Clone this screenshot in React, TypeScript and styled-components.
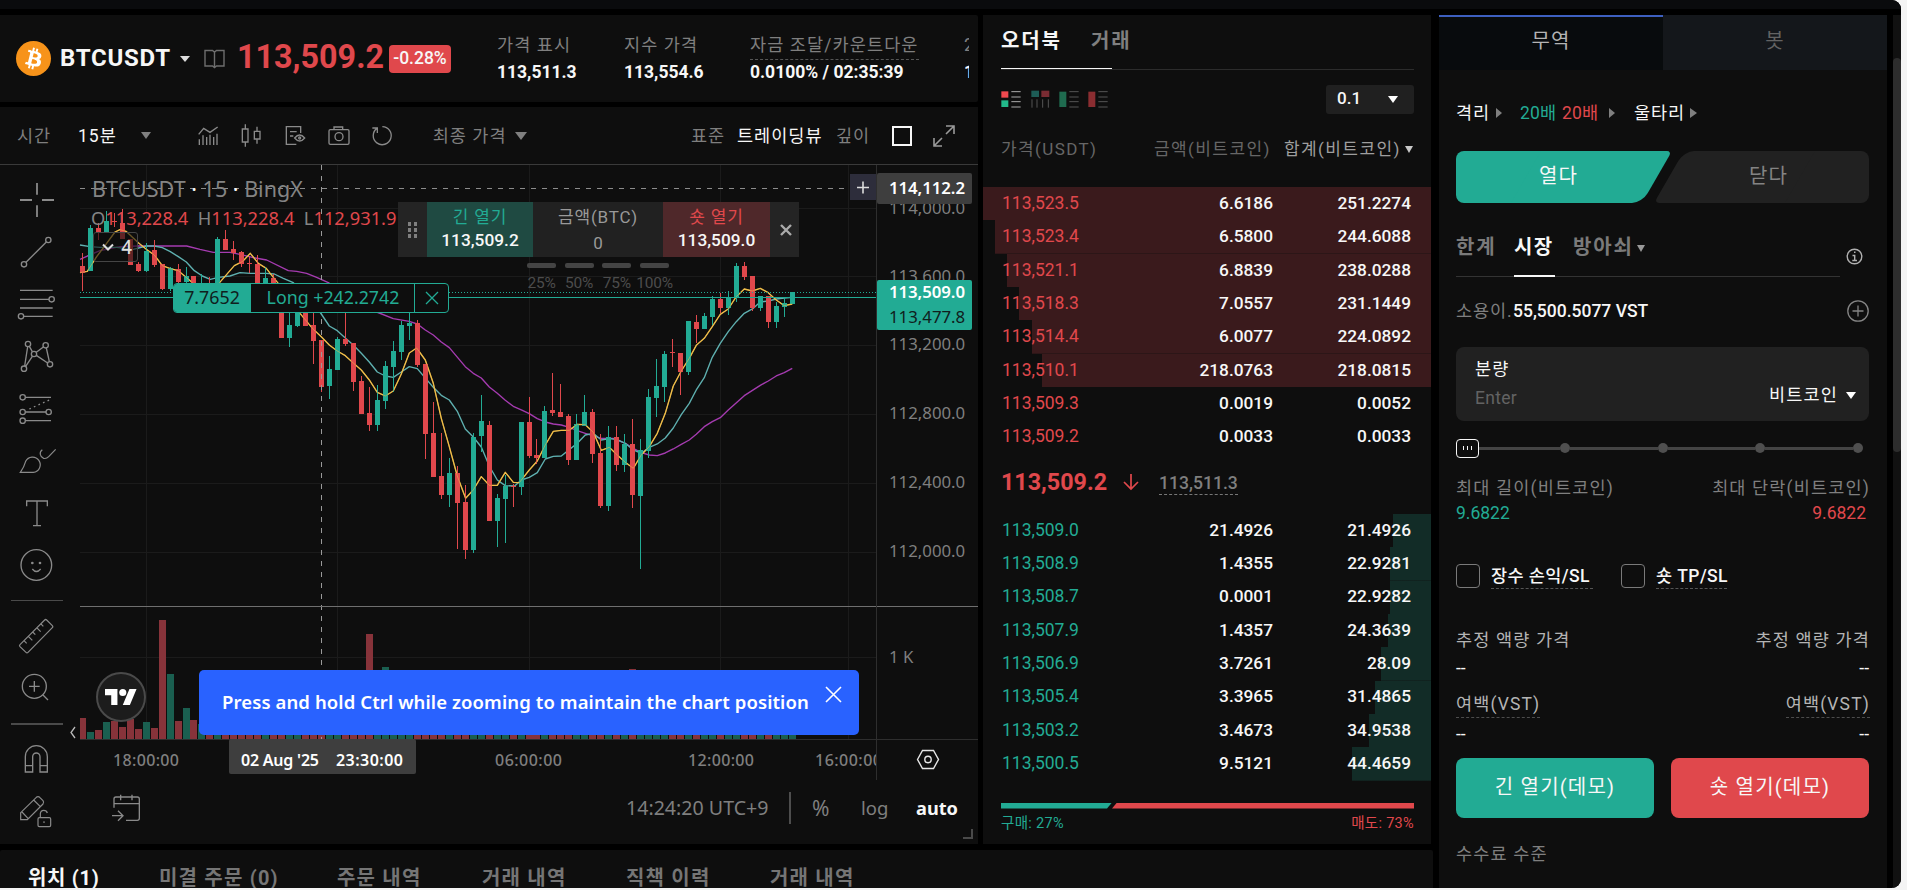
import React from 'react';
import styled, { createGlobalStyle, css } from 'styled-components';

const UI = 'Roboto, "Noto Sans CJK KR", sans-serif';
const TV = '"Noto Sans", "Open Sans", sans-serif';

const c = {
  panel: '#0e0e0e',
  field: '#212121',
  teal: '#22ab94',
  red: '#e0484c',
  white: '#f7f7f7',
  light: '#b4b4b4',
  gray: '#7f7f7f',
  dim: '#636363',
  line: '#2c2c2c',
};

const Global = createGlobalStyle`
  * { box-sizing: border-box; }
  body { margin: 0; background: #f4f4f4; font-family: ${UI}; overflow: hidden; }
  svg { display: block; flex: none; overflow: visible; }
`;

/* ---------- frame ---------- */

const Frame = styled.div`
  width: 1901px;
  height: 888px;
  background: #000;
  border-radius: 0 9px 9px 0;
  overflow: hidden;
  display: flex;
  flex-direction: column;
  color: ${c.white};
`;
const TopStrip = styled.div`
  height: 9px;
  margin-bottom: 6px;
  background: #0a0b0d;
  flex: none;
`;
const Main = styled.div`
  display: flex;
  gap: 6px;
  flex: 1;
  min-height: 0;
`;
const Workspace = styled.div`
  width: 1433px;
  display: flex;
  flex-direction: column;
  gap: 6px;
`;
const Upper = styled.div`
  display: flex;
  gap: 5px;
  height: 829px;
`;
const ChartColumn = styled.div`
  width: 978px;
  display: flex;
  flex-direction: column;
  gap: 5px;
`;
const Rail = styled.div`
  width: 8px;
  background: #111;
  padding-top: 43px;
`;
const Thumb = styled.div`
  height: 394px;
  border-radius: 4px;
  background: #2d2d2d;
`;

const Caret = styled.i<{ $w?: number; $h?: number; $color?: string; $side?: boolean }>`
  width: 0;
  height: 0;
  flex: none;
  ${({ $w = 10, $h = 6, $color = c.gray, $side }) =>
    $side
      ? css`
          border-top: ${$w / 2}px solid transparent;
          border-bottom: ${$w / 2}px solid transparent;
          border-left: ${$h}px solid ${$color};
        `
      : css`
          border-left: ${$w / 2}px solid transparent;
          border-right: ${$w / 2}px solid transparent;
          border-top: ${$h}px solid ${$color};
        `}
`;

/* ---------- ticker header ---------- */

const Ticker = styled.header`
  height: 87px;
  background: ${c.panel};
  border-radius: 0 2px 2px 0;
  padding: 0 9px 0 16px;
  display: flex;
  align-items: center;
  overflow: hidden;
`;
const Symbol = styled.div`
  width: 109px;
  margin: 0 11px 2px 9px;
  font: 700 24px/30px ${UI};
  letter-spacing: 0.75px;
  white-space: nowrap;
`;
const BookIcon = styled.svg`
  margin-left: 14px;
`;
const LastPrice = styled.div`
  width: 151px;
  margin: 0 0 3px 12px;
  font: 700 32.3px/40px ${UI};
  letter-spacing: 0;
  color: ${c.red};
`;
const Change = styled.div`
  width: 62px;
  height: 28px;
  margin-left: 1px;
  border-radius: 4px;
  background: ${c.red};
  font: 500 17.5px/26px ${UI};
  text-align: center;
`;
const Stats = styled.div`
  display: flex;
  flex: 1;
  min-width: 0;
  margin-left: 46px;
  overflow: hidden;
`;
const Stat = styled.div<{ $w: number }>`
  width: ${(p) => p.$w}px;
  flex: none;
  white-space: nowrap;
`;
const StatLabel = styled.div<{ $dashed?: boolean }>`
  display: table;
  height: 28px;
  font: 400 17.5px/27px ${UI};
  letter-spacing: 1.1px;
  color: ${c.gray};
  border-bottom: 1px dashed ${(p) => (p.$dashed ? '#555' : 'transparent')};
`;
const StatValue = styled.div`
  font: 700 17.5px/24px ${UI};
  padding-bottom: 2px;
`;

/* ---------- chart ---------- */

const ChartPanel = styled.section`
  height: 737px;
  background: ${c.panel};
  display: flex;
  flex-direction: column;
`;
const ChartToolbar = styled.div`
  height: 58px;
  border-bottom: 1px solid #3a3a3a;
  padding: 0 22px 0 17px;
  display: flex;
  align-items: center;
  flex: none;
`;
const BarText = styled.span<{ $w: number; $on?: boolean; $ml?: number }>`
  width: ${(p) => p.$w}px;
  margin-left: ${(p) => p.$ml ?? 0}px;
  font: 400 17.5px/26px ${UI};
  letter-spacing: 1px;
  color: ${(p) => (p.$on ? c.white : c.gray)};
  white-space: nowrap;
`;
const IconRow = styled.div`
  display: flex;
  gap: 13.2px;
  margin-left: 43px;
`;
const Spacer = styled.div`
  flex: 1;
`;
const LayoutBox = styled.div`
  width: 20px;
  height: 20px;
  margin: 0 20px 0 24px;
  border: 2px solid ${c.white};
`;
const ChartBody = styled.div`
  display: flex;
  flex: 1;
`;
const ToolColumn = styled.div`
  width: 80px;
  padding: 9px 0 0 11px;
  display: flex;
  flex-direction: column;
`;
const Tool = styled.div<{ $h?: number; $mt?: number }>`
  height: ${(p) => p.$h ?? 52}px;
  margin-top: ${(p) => p.$mt ?? 0}px;
  padding-left: 5px;
  flex: none;
`;
const ToolRule = styled.div<{ $mt: number; $h: number }>`
  width: 52px;
  height: ${(p) => p.$h}px;
  margin-top: ${(p) => p.$mt}px;
  background: #4a4a4a;
  flex: none;
`;
const Canvas = styled.div`
  position: relative;
  width: 898px;
`;
const Footer = styled.div`
  height: 60px;
  padding: 0 21px 10px 26px;
  display: flex;
  align-items: center;
  font: 400 19.3px/26px ${TV};
  color: ${c.gray};
`;
const FooterRule = styled.div`
  width: 2px;
  height: 32px;
  margin-left: 20px;
  background: #4d4d4d;
`;
const FooterItem = styled.span<{ $w: number; $ml: number; $on?: boolean; $size?: number }>`
  width: ${(p) => p.$w}px;
  margin-left: ${(p) => p.$ml}px;
  font-weight: ${(p) => (p.$on ? 700 : 400)};
  font-size: ${(p) => p.$size ?? 18.5}px;
  color: ${(p) => (p.$on ? c.white : c.gray)};
  white-space: nowrap;
`;
const Resize = styled.div`
  position: absolute;
  right: 5px;
  bottom: 5px;
  width: 10px;
  height: 10px;
  border: solid #4a4a4a;
  border-width: 0 2px 2px 0;
`;

const Legend = styled.div`
  position: absolute;
  left: 12px;
  top: 9px;
  color: #848484;
  font-family: ${TV};
  white-space: pre;
`;
const LegendTitle = styled.div`
  font-size: 21.5px;
  line-height: 30px;
  i { font-style: normal; color: ${c.white}; }
`;
const LegendValues = styled.div`
  width: 310px;
  overflow: hidden;
  margin-left: -1px;
  padding-top: 1px;
  font-size: 18.3px;
  line-height: 26px;
  b { font-weight: 400; color: ${c.red}; }
`;
const LegendToggle = styled.div`
  position: absolute;
  left: 13px;
  top: 67px;
  width: 45px;
  height: 30px;
  border: 1px solid #454545;
  border-radius: 3px;
  background: rgba(14, 14, 14, 0.6);
  display: flex;
  align-items: center;
  justify-content: space-between;
  padding: 0 5px 0 8px;
  font: 500 19px/28px ${TV};
  color: #dedede;
`;

const QuickOrder = styled.div`
  position: absolute;
  left: 318px;
  top: 37px;
  width: 401px;
  height: 55px;
  display: flex;
  background: #242424;
  text-align: center;
`;
const Grip = styled.div`
  width: 29px;
  display: grid;
  grid-template-columns: 4px 4px;
  gap: 2px;
  place-content: center;
  i { width: 3px; height: 4px; background: #7f7f7f; }
`;
const QuickCell = styled.div<{ $w: number; $bg: string; $color: string }>`
  width: ${(p) => p.$w}px;
  background: ${(p) => p.$bg};
  padding-top: 3px;
  font: 400 17px/24px ${UI};
  letter-spacing: 0.8px;
  color: ${(p) => p.$color};
`;
const QuickValue = styled.div<{ $muted?: boolean }>`
  font: ${(p) => (p.$muted ? '400 17px' : '500 17.3px')} / 22px ${UI};
  letter-spacing: 0;
  padding-top: ${(p) => (p.$muted ? 3 : 0)}px;
  color: ${(p) => (p.$muted ? '#999' : c.white)};
`;
const QuickClose = styled.div`
  width: 29px;
  padding-left: 2px;
  display: flex;
  align-items: center;
  justify-content: center;
`;
const Percents = styled.div`
  position: absolute;
  left: 447px;
  top: 98px;
  display: flex;
  gap: 8.7px;
`;
const Percent = styled.div`
  width: 29px;
  display: flex;
  flex-direction: column;
  align-items: center;
  font: 400 15.5px/22px ${UI};
  letter-spacing: -0.2px;
  color: #4c4c4c;
  &::before {
    content: '';
    width: 29px;
    height: 5px;
    border-radius: 2px;
    background: #444;
    margin-bottom: 4px;
  }
`;
const Position = styled.div`
  position: absolute;
  left: 93px;
  top: 118px;
  height: 30px;
  width: 276px;
  display: flex;
  border: 1px solid ${c.teal};
  border-radius: 4px;
  background: ${c.panel};
  color: ${c.teal};
  font: 400 17.8px/26px ${TV};
  overflow: hidden;
`;
const PositionQty = styled.div`
  width: 77px;
  padding-right: 1px;
  background: ${c.teal};
  color: #10201d;
  text-align: center;
`;
const PositionPnl = styled.div`
  flex: 1;
  text-align: center;
  padding-left: 1px;
  white-space: nowrap;
`;
const PositionClose = styled.div`
  width: 34px;
  border-left: 1px solid ${c.teal};
  display: flex;
  align-items: center;
  justify-content: center;
`;
const Toast = styled.div`
  position: absolute;
  left: 119px;
  top: 505px;
  width: 660px;
  height: 65px;
  border-radius: 5px;
  background: #2962ff;
  padding: 0 0 2px 23px;
  display: flex;
  align-items: center;
  font: 600 18.5px/28px ${TV};
  letter-spacing: 0.1px;
  white-space: nowrap;
  color: #fff;
`;
const ToastText = styled.div`
  width: 604px;
`;
const ToastClose = styled.div`
  margin-top: -14px;
`;
const Brand = styled.div`
  position: absolute;
  left: 16px;
  top: 507px;
  width: 50px;
  height: 50px;
  border-radius: 50%;
  border: 2px solid #4a4a4a;
  background: #1c1c1c;
  display: flex;
  align-items: center;
  justify-content: center;
`;

/* ---------- order book ---------- */

const Book = styled.section`
  width: 448px;
  background: ${c.panel};
  display: flex;
  flex-direction: column;
`;
const BookTabs = styled.div`
  height: 55px;
  margin: 0 17px 0 18px;
  border-bottom: 1px solid ${c.line};
  display: flex;
  font: 700 20px/52px ${UI};
`;
const BookTab = styled.div<{ $on?: boolean; $w: number }>`
  width: ${(p) => p.$w}px;
  height: 55px;
  letter-spacing: 1.8px;
  color: ${(p) => (p.$on ? c.white : c.gray)};
  ${(p) => p.$on && css`
    position: relative;
    &::after {
      content: '';
      position: absolute;
      left: 0;
      bottom: 1px;
      width: 111px;
      height: 1px;
      background: ${c.white};
    }
  `}
`;
const BookOptions = styled.div`
  height: 58px;
  padding: 0 17px 0 18px;
  display: flex;
  align-items: center;
  gap: 9px;
`;
const Precision = styled.div`
  width: 88px;
  height: 29px;
  border-radius: 3px;
  background: #202020;
  display: flex;
  align-items: center;
  justify-content: space-between;
  padding: 0 16px 3px 11px;
  font: 500 17px/26px ${UI};
`;
const PrecisionCaret = styled(Caret)`
  margin-top: 4px;
`;
const BookHead = styled.div`
  height: 59px;
  padding: 0 17px 17px 18px;
  display: flex;
  align-items: center;
  font: 400 17px/28px ${UI};
  letter-spacing: 1.4px;
  color: #666;
  white-space: nowrap;
`;
const HeadCell = styled.div<{ $w: number; $on?: boolean }>`
  width: ${(p) => p.$w}px;
  color: ${(p) => (p.$on ? '#9e9e9e' : '#666')};
`;
const Level = styled.div<{ $depth: number; $tint: string; $color: string }>`
  height: 33.34px;
  padding: 0 20px 1.5px 19px;
  display: grid;
  grid-template-columns: 100px 171px 138px;
  align-items: center;
  font: 500 17.3px/30px ${UI};
  text-align: right;
  background: linear-gradient(${(p) => p.$tint}, ${(p) => p.$tint}) right / ${(p) => p.$depth}px 100% no-repeat;
  span:first-child { text-align: left; font-weight: 400; font-size: 17.5px; color: ${(p) => p.$color}; }
`;
const Mid = styled.div`
  height: 60.3px;
  padding: 0 18px 3px 18px;
  display: flex;
  align-items: center;
`;
const MidPrice = styled.div`
  width: 122px;
  font: 700 23.3px/30px ${UI};
  color: ${c.red};
`;
const MarkPrice = styled.div`
  margin: 3px 0 0 20px;
  font: 500 17.6px/22px ${UI};
  color: ${c.gray};
  border-bottom: 1px dashed #777;
`;
const Ratio = styled.div`
  margin: 22px 17px 0 18px;
  height: 6px;
  display: flex;
`;
const RatioPart = styled.div<{ $w: number; $bg: string; $end?: boolean }>`
  width: ${(p) => p.$w}px;
  background: ${(p) => p.$bg};
  clip-path: ${(p) =>
    p.$end ? 'polygon(5px 0, 100% 0, 100% 100%, 0 100%)' : 'polygon(0 0, 100% 0, calc(100% - 5px) 100%, 0 100%)'};
`;
const RatioLabels = styled.div`
  margin: 4px 17px 0 18px;
  display: flex;
  justify-content: space-between;
  font: 400 14.5px/22px ${UI};
  letter-spacing: 0.3px;
`;
const Tint = styled.span<{ $color: string }>`
  color: ${(p) => p.$color};
`;

/* ---------- bottom tabs ---------- */

const History = styled.section`
  height: 38px;
  background: ${c.panel};
  border-radius: 2px 2px 0 0;
  overflow: hidden;
  display: flex;
  padding: 12px 0 0 28px;
`;
const HistoryTab = styled.div<{ $w: number; $on?: boolean }>`
  width: ${(p) => p.$w}px;
  font: 700 20px/32px ${UI};
  letter-spacing: ${(p) => (p.$on ? 0.7 : 1.2)}px;
  color: ${(p) => (p.$on ? c.white : '#757575')};
  white-space: nowrap;
`;

/* ---------- trade form ---------- */

const Trade = styled.aside`
  width: 448px;
  background: ${c.panel};
  display: flex;
  flex-direction: column;
`;
const TradeTabs = styled.div`
  display: flex;
  height: 55px;
`;
const TradeTab = styled.div<{ $on?: boolean }>`
  flex: 1;
  text-align: center;
  font: 400 20px/49px ${UI};
  letter-spacing: 1px;
  background: ${(p) => (p.$on ? '#080b0d' : '#14171b')};
  border-top: 2px solid ${(p) => (p.$on ? '#3d5fbf' : '#14171b')};
  color: ${(p) => (p.$on ? c.light : c.dim)};
`;
const Form = styled.div`
  padding: 0 18px 0 17px;
  display: flex;
  flex-direction: column;
  font: 400 17.5px/26px ${UI};
  letter-spacing: 1.15px;
  white-space: nowrap;
`;
const Leverage = styled.div`
  height: 26px;
  margin-top: 30px;
  display: flex;
  align-items: center;
`;
const LeverageText = styled.span<{ $w: number; $color?: string; $ml?: number }>`
  width: ${(p) => p.$w}px;
  margin-left: ${(p) => p.$ml ?? 0}px;
  color: ${(p) => p.$color ?? c.white};
  letter-spacing: ${(p) => (p.$color ? 0.2 : 0.9)}px;
`;
const Switch = styled.div`
  height: 52px;
  margin-top: 25px;
  display: flex;
  justify-content: space-between;
`;
const SwitchSide = styled.div<{ $on?: boolean }>`
  position: relative;
  isolation: isolate;
  width: ${(p) => (p.$on ? 213 : 212)}px;
  text-align: center;
  padding-right: ${(p) => (p.$on ? 8 : 0)}px;
  padding-left: ${(p) => (p.$on ? 0 : 11)}px;
  margin-right: ${(p) => (p.$on ? -12 : 0)}px;
  font: 400 20px/50px ${UI};
  letter-spacing: 1px;
  color: ${(p) => (p.$on ? c.white : '#848484')};
  &::before, &::after {
    content: '';
    position: absolute;
    z-index: -1;
    top: 0;
    bottom: 0;
    background: ${(p) => (p.$on ? c.teal : c.field)};
  }
  &::before {
    ${(p) => (p.$on ? 'left: 0; right: 90px; border-radius: 8px 0 0 8px;' : 'right: 0; left: 90px; border-radius: 0 8px 8px 0;')}
  }
  &::after {
    transform: skewX(-30deg);
    ${(p) => (p.$on ? 'left: 70px; right: 12.5px; border-radius: 0 5px 10px 0;' : 'right: 70px; left: 11.5px; border-radius: 10px 0 0 5px;')}
  }
`;
const TypeRow = styled.div`
  display: flex;
  margin-top: 25px;
  height: 49px;
`;
const TypeTabs = styled.div`
  width: 384px;
  height: 49px;
  border-bottom: 1px solid #333;
  display: flex;
  font: 700 20px/39px ${UI};
`;
const TypeTab = styled.div<{ $on?: boolean; $w: number; $mr: number }>`
  width: ${(p) => p.$w}px;
  height: 49px;
  margin-right: ${(p) => p.$mr}px;
  letter-spacing: ${(p) => (p.$on ? 1.4 : 1.8)}px;
  color: ${(p) => (p.$on ? c.white : '#7a7a7a')};
  border-bottom: 2px solid ${(p) => (p.$on ? c.white : 'transparent')};
`;
const TypeCaret = styled.div`
  padding-top: 17px;
  line-height: 0;
`;
const InfoIcon = styled.div`
  margin: 20px 0 0 6px;
`;
const Available = styled.div`
  height: 28px;
  margin-top: 20px;
  display: flex;
  align-items: center;
  font-weight: 500;
  letter-spacing: 0;
  b { font-weight: 400; color: ${c.gray}; width: 57px; letter-spacing: 0.9px; }
`;
const Field = styled.div`
  height: 74px;
  margin-top: 22px;
  border-radius: 8px;
  background: ${c.field};
  padding: 9px 13px 0 19px;
`;
const FieldRow = styled.div`
  display: flex;
  align-items: center;
  height: 26px;
`;
const Unit = styled.span`
  margin-right: 8px;
`;
const Placeholder = styled.span`
  color: ${c.dim};
  letter-spacing: 0.3px;
  padding-top: 6px;
`;
const Slider = styled.div`
  height: 20px;
  margin: 17px 5px 0 0;
  display: flex;
  align-items: center;
`;
const Knob = styled.div`
  width: 23px;
  height: 19px;
  border: 1px solid ${c.white};
  border-radius: 4px;
  display: flex;
  gap: 3px;
  align-items: center;
  justify-content: center;
  i { width: 1.3px; height: 4px; background: ${c.white}; }
`;
const Track = styled.div`
  width: 81px;
  height: 3px;
  background: #444;
  &:nth-of-type(n + 3) { width: 87.6px; }
`;
const Stop = styled.div`
  width: 10px;
  height: 10px;
  border-radius: 50%;
  background: #4f4f4f;
`;
const Split = styled.div<{ $mt: number; $color?: string; $tight?: boolean; $pr?: number }>`
  margin-top: ${(p) => p.$mt}px;
  padding-right: ${(p) => p.$pr ?? 0}px;
  height: 26px;
  display: flex;
  justify-content: space-between;
  color: ${(p) => p.$color ?? c.gray};
  span:last-child { margin-right: ${(p) => (p.$tight ? 0 : -1)}px; }
  ${(p) => p.$tight && 'letter-spacing: 0;'}
`;
const Checks = styled.div`
  margin-top: 38px;
  height: 24px;
  display: flex;
  align-items: center;
`;
const Box = styled.div`
  width: 24px;
  height: 24px;
  margin-right: 11px;
  border: 1px solid #7a7a7a;
  border-radius: 4px;
`;
const CheckLabel = styled.div<{ $w: number; $mr?: number }>`
  width: ${(p) => p.$w}px;
  margin-right: ${(p) => p.$mr ?? 0}px;
  height: 26px;
  border-bottom: 1px dashed #555;
  font-weight: 500;
  letter-spacing: 0.4px;
`;
const Dashed = styled.span`
  height: 27px;
  border-bottom: 1px dashed #4d4d4d;
`;
const Actions = styled.div`
  margin-top: 11px;
  display: flex;
  gap: 17px;
`;
const Action = styled.div<{ $bg: string }>`
  width: 198px;
  height: 60px;
  border-radius: 8px;
  background: ${(p) => p.$bg};
  text-align: center;
  font: 400 20px/58px ${UI};
  letter-spacing: 1.2px;
`;
const Fee = styled.div`
  margin-top: 23px;
  color: ${c.gray};
`;

/* ---------- chart data ---------- */

// [direction, high, body top, body bottom, low], three units to a pixel
type Candle = [0 | 1, number, number, number, number];
const candles: Candle[] = [
  [0, -110, -72, -52, 2], [1, -194, -186, -58, -58], [0, -200, -186, -174, -150], [1, -238, -206, -174, -174],
  [0, -230, -208, -204, -188], [0, -242, -202, -154, -154], [0, -154, -154, -75, -75], [0, -85, -78, -58, -54],
  [1, -142, -118, -58, -54], [0, -150, -120, -75, -70], [0, -77, -77, -4, 0], [1, -70, -66, -4, 2],
  [0, -78, -62, -24, -20], [1, -70, -42, -24, -20], [0, -42, -42, 10, 10], [1, -48, -10, 20, 20],
  [0, -40, -10, 20, 30], [1, -158, -154, 20, 20], [0, -180, -153, -120, -120], [0, -148, -124, -110, -90],
  [0, -118, -113, -78, -70], [0, -100, -82, -78, -52], [0, -104, -77, -10, -10], [1, -70, -36, -10, 0],
  [0, -48, -36, 5, 20], [0, 0, 0, 143, 143], [1, 60, 105, 143, 170], [1, 20, 30, 108, 110],
  [0, 20, 30, 108, 108], [0, 60, 105, 153, 222], [0, 150, 150, 291, 305], [1, 198, 237, 288, 327],
  [1, 141, 147, 240, 240], [0, 50, 147, 162, 168], [0, 159, 159, 276, 303], [0, 258, 273, 372, 372],
  [0, 291, 369, 405, 423], [1, 285, 330, 405, 423], [1, 213, 228, 333, 357], [1, 153, 183, 231, 306],
  [1, 93, 105, 186, 210], [1, 69, 99, 108, 150], [0, 90, 99, 225, 231], [0, 222, 222, 432, 507],
  [0, 336, 429, 561, 561], [0, 429, 558, 615, 627], [1, 504, 549, 615, 651], [0, 528, 549, 639, 777],
  [0, 585, 636, 780, 807], [1, 429, 441, 780, 789], [1, 315, 393, 438, 486], [0, 393, 405, 693, 693],
  [1, 612, 624, 693, 771], [1, 555, 588, 627, 759], [0, 582, 588, 591, 651], [1, 396, 396, 591, 615],
  [0, 321, 396, 498, 504], [0, 447, 495, 504, 522], [1, 348, 363, 504, 504], [0, 249, 360, 369, 378],
  [0, 282, 366, 381, 381], [0, 372, 378, 510, 525], [1, 372, 402, 510, 510], [1, 315, 366, 408, 408],
  [0, 357, 366, 492, 519], [0, 432, 489, 648, 654], [1, 408, 441, 648, 663], [0, 408, 441, 525, 543],
  [1, 432, 462, 525, 546], [0, 387, 462, 615, 654], [1, 447, 480, 618, 837], [1, 297, 321, 483, 504],
  [1, 207, 288, 324, 381], [1, 183, 192, 291, 336], [0, 147, 186, 189, 231], [0, 189, 189, 246, 315],
  [1, 93, 93, 246, 255], [0, 75, 96, 117, 159], [1, 69, 78, 117, 117], [1, 18, 27, 81, 105],
  [0, 9, 27, 54, 69], [1, 3, 24, 54, 75], [1, -81, -72, 24, 36], [0, -84, -72, -39, -30],
  [0, -42, -42, 54, 62], [1, 18, 18, 54, 62], [0, 18, 18, 96, 114], [1, 36, 48, 96, 114],
  [1, 24, 39, 51, 81], [1, 6, 6, 42, 42],
];

const volumes: Record<number, number> = {
  0: 63, 1: 21, 2: 27, 3: 51, 4: 54, 5: 36, 6: 61, 7: 30, 8: 51, 9: 33, 10: 357, 11: 195, 12: 54, 13: 93, 14: 57,
  36: 315, 38: 216, 69: 210,
};

const ma = [
  {
    color: '#a53bb0',
    points:
      '240,-92 262,-102 300,-118 360,-130 415,-132 560,-132 600,-122 640,-113 690,-113 720,-107 760,-97 800,-90 865,-58 890,-56 920,-50 950,-38 985,-22 1060,30 1130,66 1180,86 1228,94 1252,102 1276,120 1300,135 1324,156 1348,173 1396,230 1420,250 1444,264 1468,291 1492,310 1516,331 1540,349 1564,360 1588,371 1612,386 1636,396 1660,402 1684,405 1708,412 1732,422 1756,430 1804,445 1840,445 1876,460 1900,475 1924,488 1948,495 1972,497 1996,489 2020,477 2044,463 2068,450 2089,433 2113,410 2137,395 2161,383 2185,360 2233,317 2281,286 2305,273 2329,258 2353,248 2377,235',
  },
  {
    color: '#5fb0b0',
    points:
      '240,-135 270,-130 300,-128 350,-128 400,-122 439,-132 463,-132 487,-127 511,-115 535,-100 559,-84 583,-58 607,-42 631,-32 655,-38 690,-42 720,-52 751,-50 799,-50 823,-48 850,-35 880,-22 920,20 960,66 988,108 1012,122 1036,144 1060,165 1084,190 1108,216 1132,246 1156,258 1180,262 1204,246 1228,230 1252,236 1276,264 1300,292 1324,316 1348,330 1372,364 1396,417 1420,441 1444,471 1468,528 1492,570 1516,587 1544,588 1564,570 1588,562 1612,548 1636,507 1660,499 1684,498 1708,479 1732,460 1756,435 1780,430 1804,450 1828,446 1852,449 1876,460 1900,480 1924,490 1948,472 1972,462 1996,444 2020,414 2044,374 2068,340 2089,300 2113,263 2137,202 2161,160 2185,125 2209,95 2233,70 2260,55 2281,36 2305,33 2329,27 2353,24 2377,22',
  },
  {
    color: '#efbd4a',
    points:
      '240,-52 262,-56 290,-100 320,-140 345,-174 360,-181 378,-176 415,-142 439,-122 463,-105 487,-73 511,-64 535,-58 575,-24 600,0 640,0 662,-26 703,-73 727,-85 751,-110 775,-80 799,-65 823,-34 860,10 900,70 940,118 964,140 988,165 1012,183 1036,197 1060,219 1084,240 1108,270 1132,307 1156,318 1180,303 1204,252 1228,189 1250,174 1276,210 1300,280 1324,385 1348,470 1372,558 1397,625 1420,600 1444,560 1468,586 1492,586 1516,547 1540,577 1558,578 1588,540 1612,513 1636,465 1660,424 1684,421 1708,421 1732,403 1756,404 1780,427 1804,481 1828,472 1852,495 1876,517 1900,535 1924,495 1948,470 1972,430 1996,370 2020,288 2044,243 2068,205 2089,166 2113,145 2137,110 2161,73 2185,57 2209,20 2233,-3 2257,3 2281,-5 2305,8 2329,30 2353,47 2377,42',
  },
];

const yOf = (v: number) => 290 + v / 3;
const xOf = (i: number) => Math.round(82.3 + i * 7.977 - 0.5) + 0.5;

const PriceChart = () => (
  <svg width="898" height="618" viewBox="80 165 898 618" fontFamily={TV}>
    <g stroke="#1b1b1b" shapeRendering="crispEdges">
      {[208.5, 276.5, 345.5, 414.5, 483.5, 552.5, 657.5].map((y) => <path key={y} d={`M80 ${y}H876`} />)}
      {[146.5, 337.5, 529.5, 720.5, 848.5].map((x) => <path key={x} d={`M${x} 165V739`} />)}
    </g>
    <g shapeRendering="crispEdges">
      {candles.map(([up], i) => {
        const h = (volumes[i] ?? 45) / 3;
        return <rect key={i} x={Math.max(80, xOf(i) - 3.5)} y={739 - h} width={xOf(i) - 3.5 < 80 ? 6 : 7} height={h} fill={up ? '#1a5f50' : '#87333a'} />;
      })}
    </g>
    {ma.map((l) => (
      <polyline key={l.color} points={l.points} transform="translate(0 290) scale(.3333)" fill="none" stroke={l.color} strokeWidth="4.1" strokeLinejoin="round" />
    ))}
    <g shapeRendering="crispEdges">
      {candles.map(([up, hi, top, bottom, lo], i) => {
        const fill = up ? '#22ab94' : '#e0484c';
        const x = xOf(i);
        return (
          <g key={i} fill={fill}>
            <rect x={x - 0.5} y={yOf(hi)} width="1" height={(lo - hi) / 3} />
            <rect x={Math.max(80, x - 2.5)} y={yOf(top)} width="5" height={Math.max(1, (bottom - top) / 3)} />
          </g>
        );
      })}
    </g>
    <polyline points={ma[2].points} transform="translate(0 290) scale(.3333)" fill="none" stroke={ma[2].color} strokeWidth="3" opacity=".55" />
    <path d="M80 292.5H876" stroke="#22ab94" strokeDasharray="1 2" />
    <path d="M80 297.5H876" stroke="#22ab94" />
    <path d="M80 188.5H876" stroke="#8c8c8c" strokeDasharray="5 6" />
    <path d="M321.5 165V739" stroke="#9a9a9a" strokeDasharray="5 6" />
    <path d="M80 606.5H978" stroke="#6f6f6f" />
    <path d="M80 739.5H978M876.5 165V780" stroke="#2e2e2e" />
    <path d="M75 727l-4 5.500 4 5.500" fill="none" stroke="#bbb" strokeWidth="1.300" />

    <g fill="#7f7f7f" fontSize="16.8">
      <text x="889" y="214">114,000.0</text>
      <text x="889" y="282">113,600.0</text>
      <text x="889" y="350">113,200.0</text>
      <text x="889" y="419">112,800.0</text>
      <text x="889" y="488">112,400.0</text>
      <text x="889" y="557">112,000.0</text>
      <text x="889" y="663">1 K</text>
    </g>
    <rect x="850" y="174" width="26" height="26" fill="#2d2d3b" />
    <path d="M857 187.500h12M863 181.500v12" stroke="#ddd" strokeWidth="1.600" />
    <rect x="877" y="173" width="95" height="31" rx="2" fill="#3e3e3e" />
    <rect x="877" y="280" width="95" height="50" rx="2" fill="#22ab94" />
    <g fontSize="16.8">
      <text x="889" y="194" fill="#fff" fontWeight="600" textLength="76">114,112.2</text>
      <text x="889" y="298" fill="#fff" fontWeight="600" textLength="76">113,509.0</text>
      <text x="889" y="323" fill="#10201d">113,477.8</text>
    </g>

    <clipPath id="scale"><rect x="80" y="740" width="796" height="40" /></clipPath>
    <g fill="#7f7f7f" fontSize="16" fontWeight="500" clipPath="url(#scale)">
      <text x="113" y="766" textLength="66">18:00:00</text>
      <text x="495" y="766" textLength="67">06:00:00</text>
      <text x="688" y="766" textLength="66">12:00:00</text>
      <text x="815" y="766" textLength="67">16:00:00</text>
    </g>
    <rect x="229" y="739" width="187" height="35" rx="2" fill="#3e3e3e" />
    <g fill="#fff" fontSize="16" fontWeight="600">
      <text x="241" y="766" textLength="78">02 Aug '25</text>
      <text x="336" y="766" textLength="67">23:30:00</text>
    </g>
    <g fill="none" stroke="#e6e6e6" strokeWidth="1.400">
      <path d="M917.500 759.500l5-9h11l5 9-5 9h-11z" />
      <circle cx="928" cy="759.500" r="3.200" />
    </g>
  </svg>
);

/* ---------- icons ---------- */

const Line = ({ box, w, h, sw = 4, color = '#8a8a8a', children }: { box: string; w: number; h: number; sw?: number; color?: string; children: React.ReactNode }) => (
  <svg width={w} height={h} viewBox={box} fill="none" stroke={color} strokeWidth={sw}>{children}</svg>
);

const Dots = ({ at, r = 8 }: { at: number[][]; r?: number }) => (
  <>{at.map(([x, y]) => <circle key={`${x}-${y}`} cx={x} cy={y} r={r} />)}</>
);

const DrawingTools = () => (
  <ToolColumn>
    <Tool><Line box="48 522 120 156" w={40} h={52} color="#b5b5b5"><path d="M111 549V584M111 616V651M60 600H96M126 600H162" /></Line></Tool>
    <Tool><Line box="48 678 120 156" w={40} h={52}><Dots at={[[145, 720], [72, 793]]} /><path d="M78 787L139 726" /></Line></Tool>
    <Tool><Line box="48 -36 120 156" w={40} h={52}><Dots at={[[155, 28], [63, 79]]} /><path d="M60 1H158M60 28H147M60 54H158M71 79H158" /></Line></Tool>
    <Tool><Line box="48 120 120 156" w={40} h={52}><Dots at={[[84, 162], [137, 166], [102, 192], [150, 223], [72, 236]]} /><path d="M83 170L74 228M88 169L97 185M130 171L109 187M139 174L148 215M97 199L77 229M109 196L143 219" /></Line></Tool>
    <Tool><Line box="48 276 120 156" w={40} h={52}><Dots at={[[68, 322], [68, 366], [146, 366], [68, 392]]} /><path d="M76 322H153M76 366H138M76 392H153" /><path d="M88 357L150 329" strokeDasharray="5 10" /></Line></Tool>
    <Tool><Line box="48 432 120 156" w={40} h={52} sw={3.6}><path d="M61 547H100A23 23 0 1 0 77 514Q72 532 61 547ZM127 479C117 486 119 500 131 505C138 507 142 504 146 500L167 478" /></Line></Tool>
    <Tool><Line box="48 588 120 156" w={40} h={52}><path d="M80 649V633H142V649M111 633V706M99 707H123" /></Line></Tool>
    <Tool><Line box="48 744 120 156" w={40} h={52}><circle cx="109" cy="825" r="46" /><path d="M97 837Q109 852 122 837" /><g fill="#8a8a8a" stroke="none"><Dots r={4} at={[[97, 819], [120, 819]]} /></g></Line></Tool>
    <ToolRule $mt={10} $h={1} />
    <Tool $mt={9} $h={51}><Line box="48 60 120 153" w={40} h={51} sw={3.6}><path d="M134 90Q137 87 140 90L157 107Q160 110 157 113L84 187Q81 190 78 187L60 170Q57 167 60 164ZM72 152L80 160M85 139L97 151M98 126L106 134M110 113L122 125M122 101L130 109" /></Line></Tool>
    <Tool><Line box="48 213 120 156" w={40} h={52}><circle cx="103" cy="289" r="36" /><path d="M103 273V305M87 289H119M129 315L144 330" /></Line></Tool>
    <ToolRule $mt={10} $h={2} />
    <Tool $mt={8}><Line box="48 429 120 156" w={40} h={52}><path d="M76 546V500A33 33 0 0 1 142 500V546H120V500A11 11 0 0 0 98 500V546ZM76 527H98M120 527H142" /></Line></Tool>
    <Tool $mt={1}><Line box="48 588 120 156" w={40} h={52} sw={3.6}><path d="M62 689V668L109 622Q114 618 119 622L129 632Q133 637 129 642L82 689ZM66 666L84 685M101 630L121 650" /><rect x="114" y="683" width="38" height="27" rx="4" /><path d="M121 683V671Q122 661 131 661Q140 661 142 669M132 694V699" /></Line></Tool>
  </ToolColumn>
);

const BtcLogo = () => (
  <svg width="35" height="35" viewBox="0 0 32 32">
    <circle cx="16" cy="16" r="16" fill="#f7931a" />
    <path fill="#fff" d="M23.189 14.02c.314-2.096-1.283-3.223-3.465-3.975l.708-2.84-1.728-.43-.69 2.765c-.454-.114-.92-.22-1.385-.326l.695-2.783L15.596 6l-.708 2.839c-.376-.086-.746-.17-1.104-.26l.002-.009-2.384-.595-.46 1.846s1.283.294 1.256.312c.7.175.826.638.805 1.006l-.806 3.235c.048.012.11.03.18.057l-.183-.045-1.13 4.532c-.086.212-.303.531-.793.41.018.025-1.256-.313-1.256-.313l-.858 1.978 2.25.561c.418.105.828.215 1.231.318l-.715 2.872 1.727.43.708-2.84c.472.127.93.245 1.378.357l-.706 2.828 1.728.43.715-2.866c2.948.558 5.164.333 6.097-2.333.752-2.146-.037-3.385-1.588-4.192 1.13-.26 1.98-1.003 2.207-2.538zm-3.95 5.538c-.533 2.147-4.148.986-5.32.695l.95-3.805c1.172.293 4.929.872 4.37 3.11zm.535-5.569c-.487 1.953-3.495.96-4.47.717l.86-3.45c.975.243 4.118.696 3.61 2.733z" />
  </svg>
);

const Cross = ({ size, color, sw }: { size: number; color: string; sw: number }) => (
  <svg width={size} height={size} viewBox={`0 0 ${size} ${size}`} stroke={color} strokeWidth={sw}>
    <path d={`M0 0L${size} ${size}M${size} 0L0 ${size}`} />
  </svg>
);

const BookIcons = () => (
  <>
    <svg width="21" height="20" viewBox="62 265 63 60">
      <path fill="#f0494f" d="M63 272h21v19H63z" /><path fill="#22b98a" d="M63 299h21v20H63z" />
      <path stroke="#aaa" strokeWidth="3" d="M93 273h28M93 289h28M93 303h28M93 319h28" />
    </svg>
    <svg width="19" height="20" viewBox="152 265 57 60">
      <path fill="#1d5c56" d="M153 270h23v19h-23z" /><path fill="#7a2c33" d="M183 270h24v19h-24z" />
      <path stroke="#555" strokeWidth="3" d="M155 296v25M170 296v25M187 296v25M204 296v25" />
    </svg>
    <svg width="20" height="20" viewBox="236 265 60 60">
      <path fill="#1f6b4f" d="M237 273h21v46h-21z" /><path stroke="#555" strokeWidth="3" d="M267 273h28M267 289h28M267 303h28M267 319h28" />
    </svg>
    <svg width="20" height="20" viewBox="323 265 60 60">
      <path fill="#8b2d31" d="M324 273h21v46h-21z" /><path stroke="#555" strokeWidth="3" d="M354 273h28M354 289h28M354 303h28M354 319h28" />
    </svg>
  </>
);

const asks: [string, string, string, number][] = [
  ['113,523.5', '6.6186', '251.2274', 448],
  ['113,523.4', '6.5800', '244.6088', 436],
  ['113,521.1', '6.8839', '238.0288', 424],
  ['113,518.3', '7.0557', '231.1449', 412],
  ['113,514.4', '6.0077', '224.0892', 399],
  ['113,510.1', '218.0763', '218.0815', 389],
  ['113,509.3', '0.0019', '0.0052', 0],
  ['113,509.2', '0.0033', '0.0033', 0],
];
const bids: [string, string, string, number][] = [
  ['113,509.0', '21.4926', '21.4926', 38],
  ['113,508.9', '1.4355', '22.9281', 41],
  ['113,508.7', '0.0001', '22.9282', 41],
  ['113,507.9', '1.4357', '24.3639', 43],
  ['113,506.9', '3.7261', '28.09', 50],
  ['113,505.4', '3.3965', '31.4865', 56],
  ['113,503.2', '3.4673', '34.9538', 62],
  ['113,500.5', '9.5121', '44.4659', 79],
];

const Levels = ({ rows, tint, color }: { rows: [string, string, string, number][]; tint: string; color: string }) => (
  <div>
    {rows.map(([price, amount, total, depth]) => (
      <Level key={price} $depth={depth} $tint={tint} $color={color}>
        <span>{price}</span><span>{amount}</span><span>{total}</span>
      </Level>
    ))}
  </div>
);

export default function App() {
  return (
    <>
      <Global />
      <Frame>
        <TopStrip />
        <Main>
          <Workspace>
            <Upper>
              <ChartColumn>
                <Ticker>
                  <BtcLogo />
                  <Symbol>BTCUSDT</Symbol>
                  <Caret $w={10} $h={6} $color="#ddd" />
                  <BookIcon width="21" height="20" viewBox="0 0 21 20" fill="none" stroke="#6e6e6e" strokeWidth="1.400">
                    <path d="M1 1.500h7.500l2 1.500 2-1.500H20V17h-7.500l-2 1.500-2-1.500H1zM10.500 3v15.500" />
                  </BookIcon>
                  <LastPrice>113,509.2</LastPrice>
                  <Change>-0.28%</Change>
                  <Stats>
                    <Stat $w={127}><StatLabel>가격 표시</StatLabel><StatValue>113,511.3</StatValue></Stat>
                    <Stat $w={126}><StatLabel>지수 가격</StatLabel><StatValue>113,554.6</StatValue></Stat>
                    <Stat $w={214}><StatLabel $dashed>자금 조달/카운트다운</StatLabel><StatValue>0.0100% / 02:35:39</StatValue></Stat>
                    <Stat $w={90}><StatLabel>24h</StatLabel><StatValue>115,0</StatValue></Stat>
                  </Stats>
                </Ticker>

                <ChartPanel>
                  <ChartToolbar>
                    <BarText $w={61}>시간</BarText>
                    <BarText $w={63} $on>15분</BarText>
                    <Caret $w={10} $h={7} />
                    <IconRow>
                      <Line box="584 363 90 90" w={30} h={30}><path d="M600 435V418M611 435V406M622 435V411M632 435V404M643 435V411M653 435V401M598 403L613 385L632 397L655 381" /></Line>
                      <Line box="712 363 90 90" w={30} h={30}><path d="M728 387H745V426H728ZM737 373V387M737 426V440M764 394H781V417H764ZM772 380V394M772 417V431" /></Line>
                      <Line box="842 363 90 90" w={30} h={30}><path d="M904 399V380H861V433H891M872 395H892M872 408H882M886 414Q901 396 916 414Q901 432 886 414Z" /><circle cx="901" cy="414" r="3" /></Line>
                      <Line box="971 363 90 90" w={30} h={30}><rect x="986" y="389" width="60" height="44" rx="4" /><path d="M1001 389V381H1027V389" /><circle cx="1016" cy="410" r="12" /></Line>
                      <Line box="1101 363 90 90" w={30} h={30}><path d="M1131 385A27 27 0 1 0 1147 380M1117 384H1132V399" /></Line>
                    </IconRow>
                    <BarText $w={82} $ml={36}>최종 가격</BarText>
                    <Caret $w={13} $h={8} />
                    <Spacer />
                    <BarText $w={46}>표준</BarText>
                    <BarText $w={99} $on>트레이딩뷰</BarText>
                    <BarText $w={32}>깊이</BarText>
                    <LayoutBox />
                    <Line box="0 0 24 24" w={24} h={24} sw={1.6} color="#9a9a9a"><path d="M14 10L21.500 2.500M14 2H22V10M10 14L2.500 21.500M2 14V22H10" /></Line>
                  </ChartToolbar>

                  <ChartBody>
                    <DrawingTools />
                    <Canvas>
                      <PriceChart />
                      <Legend>
                        <LegendTitle>BTCUSDT<i> · </i>15<i> · </i>BingX</LegendTitle>
                        <LegendValues>O<b>113,228.4</b>{'  '}H<b>113,228.4</b>{'  '}L<b>112,931.9</b></LegendValues>
                      </Legend>
                      <LegendToggle>
                        <Line box="0 0 12 8" w={12} h={8} sw={2} color="#dedede"><path d="M1 1.500L6 6.500L11 1.500" /></Line>
                        4
                      </LegendToggle>
                      <QuickOrder>
                        <Grip><i /><i /><i /><i /><i /><i /></Grip>
                        <QuickCell $w={106} $bg="#1f4a42" $color={c.teal}>긴 열기<QuickValue>113,509.2</QuickValue></QuickCell>
                        <QuickCell $w={130} $bg="#212121" $color="#999">금액(BTC)<QuickValue $muted>0</QuickValue></QuickCell>
                        <QuickCell $w={107} $bg="#4f282a" $color={c.red}>숏 열기<QuickValue>113,509.0</QuickValue></QuickCell>
                        <QuickClose><Cross size={10} color="#aaa" sw={2.4} /></QuickClose>
                      </QuickOrder>
                      <Percents>
                        <Percent>25%</Percent><Percent>50%</Percent><Percent>75%</Percent><Percent>100%</Percent>
                      </Percents>
                      <Position>
                        <PositionQty>7.7652</PositionQty>
                        <PositionPnl>Long +242.2742</PositionPnl>
                        <PositionClose><Cross size={12} color={c.teal} sw={1.3} /></PositionClose>
                      </Position>
                      <Brand>
                        <svg width="32" height="18" viewBox="0 4 36 18" fill="#fff"><path d="M14 22H7V11H0V4h14v18zM28 22h-8l7.500-18h8L28 22z" /><circle cx="20" cy="8" r="4" /></svg>
                      </Brand>
                      <Toast>
                        <ToastText>Press and hold Ctrl while zooming to maintain the chart position</ToastText>
                        <ToastClose><Cross size={15} color="#fff" sw={1.6} /></ToastClose>
                      </Toast>
                      <Footer>
                        <Line box="318 591 120 120" w={40} h={40}><path d="M342 650V624Q342 618 348 618H412Q418 618 418 624V682Q418 688 412 688H378M342 638H418M362 611V628M396 611V628M336 674H368M354 659L369 674L354 689" /></Line>
                        <Spacer />
                        <FooterItem $w={143} $ml={0} $size={19.6}>14:24:20 UTC+9</FooterItem>
                        <FooterRule />
                        <FooterItem $w={19} $ml={21} $size={21}>%</FooterItem>
                        <FooterItem $w={27} $ml={30}>log</FooterItem>
                        <FooterItem $w={41} $ml={28} $size={18.2} $on>auto</FooterItem>
                      </Footer>
                      <Resize />
                    </Canvas>
                  </ChartBody>
                </ChartPanel>
              </ChartColumn>

              <Book>
                <BookTabs>
                  <BookTab $w={90} $on>오더북</BookTab>
                  <BookTab $w={60}>거래</BookTab>
                </BookTabs>
                <BookOptions>
                  <BookIcons />
                  <Spacer />
                  <Precision>0.1<PrecisionCaret $w={10} $h={7} $color="#fff" /></Precision>
                </BookOptions>
                <BookHead>
                  <HeadCell $w={153}>가격(USDT)</HeadCell>
                  <HeadCell $w={130}>금액(비트코인)</HeadCell>
                  <HeadCell $w={121} $on>합계(비트코인)</HeadCell>
                  <Caret $w={9} $h={7} $color="#c8c8c8" />
                </BookHead>
                <Levels rows={asks} tint="#3a1a1c" color={c.red} />
                <Mid>
                  <MidPrice>113,509.2</MidPrice>
                  <Line box="0 0 16 16" w={16} h={16} sw={1.7} color={c.red}><path d="M8 0V15M1 8L8 15L15 8" /></Line>
                  <MarkPrice>113,511.3</MarkPrice>
                </Mid>
                <Levels rows={bids} tint="#122c27" color={c.teal} />
                <Ratio>
                  <RatioPart $w={111} $bg={c.teal} />
                  <RatioPart $w={302} $bg={c.red} $end />
                </Ratio>
                <RatioLabels>
                  <Tint $color={c.teal}>구매: 27%</Tint>
                  <Tint $color={c.red}>매도: 73%</Tint>
                </RatioLabels>
              </Book>
            </Upper>

            <History>
              <HistoryTab $w={131} $on>위치 (1)</HistoryTab>
              <HistoryTab $w={178}>미결 주문 (0)</HistoryTab>
              <HistoryTab $w={145}>주문 내역</HistoryTab>
              <HistoryTab $w={144}>거래 내역</HistoryTab>
              <HistoryTab $w={144}>직책 이력</HistoryTab>
              <HistoryTab $w={144}>거래 내역</HistoryTab>
            </History>
          </Workspace>

          <Trade>
            <TradeTabs><TradeTab $on>무역</TradeTab><TradeTab>봇</TradeTab></TradeTabs>
            <Form>
              <Leverage>
                <LeverageText $w={40}>격리</LeverageText>
                <Caret $side $w={10} $h={6} />
                <LeverageText $w={42} $ml={18} $color={c.teal}>20배</LeverageText>
                <LeverageText $w={47} $color={c.red}>20배</LeverageText>
                <Caret $side $w={10} $h={6} />
                <LeverageText $w={56} $ml={19}>울타리</LeverageText>
                <Caret $side $w={10} $h={7} />
              </Leverage>
              <Switch><SwitchSide $on>열다</SwitchSide><SwitchSide>닫다</SwitchSide></Switch>
              <TypeRow>
                <TypeTabs>
                  <TypeTab $w={40} $mr={18}>한계</TypeTab>
                  <TypeTab $w={41} $mr={18} $on>시장</TypeTab>
                  <TypeTab $w={60} $mr={4}>방아쇠</TypeTab>
                  <TypeCaret><Caret as="div" $w={9} $h={7} $color="#999" /></TypeCaret>
                </TypeTabs>
                <InfoIcon>
                  <Line box="0 0 17 17" w={17} h={17} sw={1.4} color="#b0b0b0"><circle cx="8.500" cy="8.500" r="7.300" /><path d="M6.500 7.500H8.700V12.500M6.300 12.500H11M8 4.200H9.500" /></Line>
                </InfoIcon>
              </TypeRow>
              <Available>
                <b>소용이.</b>55,500.5077 VST
                <Spacer />
                <Line box="0 0 22 22" w={22} h={22} sw={1.3} color="#858585"><circle cx="11" cy="11" r="10.200" /><path d="M11 5.500V16.500M5.500 11H16.500" /></Line>
              </Available>
              <Field>
                <FieldRow>분량</FieldRow>
                <FieldRow><Placeholder>Enter</Placeholder><Spacer /><Unit>비트코인</Unit><Caret $w={10} $h={7} $color="#fff" /></FieldRow>
              </Field>
              <Slider>
                <Knob><i /><i /><i /></Knob>
                <Track /><Stop /><Track /><Stop /><Track /><Stop /><Track /><Stop />
              </Slider>
              <Split $mt={17}><span>최대 길이(비트코인)</span><span>최대 단락(비트코인)</span></Split>
              <Split $mt={-1} $pr={3} $tight><Tint $color={c.teal}>9.6822</Tint><Tint $color={c.red}>9.6822</Tint></Split>
              <Checks>
                <Box /><CheckLabel $w={102} $mr={28}>장수 손익/SL</CheckLabel>
                <Box /><CheckLabel $w={71}>숏 TP/SL</CheckLabel>
              </Checks>
              <Split $mt={39} $color={c.light}><span>추정 액량 가격</span><span>추정 액량 가격</span></Split>
              <Split $mt={2} $color={c.white} $tight><span>--</span><span>--</span></Split>
              <Split $mt={10} $color={c.light}><Dashed>여백(VST)</Dashed><Dashed>여백(VST)</Dashed></Split>
              <Split $mt={4} $color={c.white} $tight><span>--</span><span>--</span></Split>
              <Actions><Action $bg={c.teal}>긴 열기(데모)</Action><Action $bg={c.red}>숏 열기(데모)</Action></Actions>
              <Fee>수수료 수준</Fee>
            </Form>
          </Trade>

          <Rail><Thumb /></Rail>
        </Main>
      </Frame>
    </>
  );
}
